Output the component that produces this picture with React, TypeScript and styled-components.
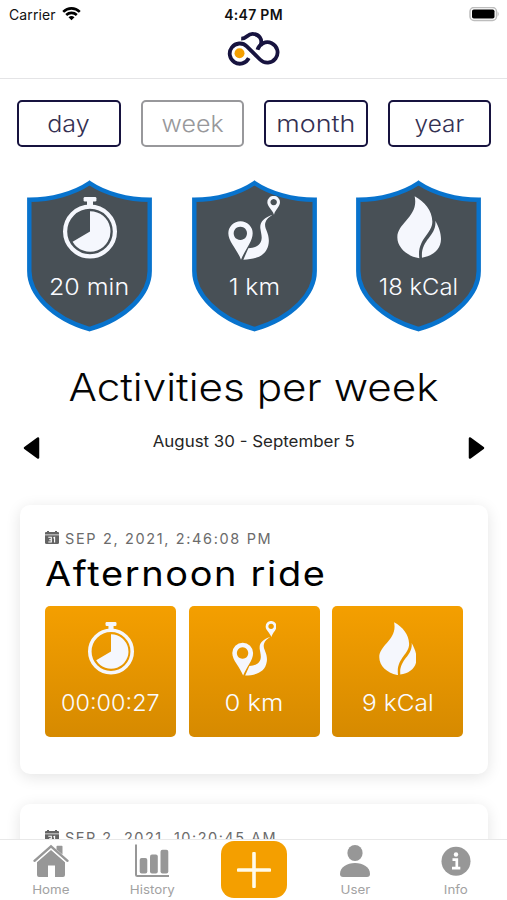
import React from "react";
import styled, { createGlobalStyle } from "styled-components";

const GlobalStyle = createGlobalStyle`
  * { box-sizing: border-box; }
  body { margin: 0; background: #fff; font-family: Inter, "Liberation Sans", sans-serif; }
  svg { display: block; flex: none; }
`;

const navy = "#17133f";
const orange = "#f49f00";

const Screen = styled.div`
  width: 507px;
  height: 900px;
  display: flex;
  flex-direction: column;
  overflow: hidden;
  background: #fff;
`;

const Header = styled.header`
  height: 79px;
  flex: none;
  border-bottom: 1px solid #e4e4e6;
`;

const StatusBar = styled.div`
  height: 28px;
  padding: 0 7px 0 9px;
  display: grid;
  grid-template-columns: 1fr auto 1fr;
  align-items: center;
  font-size: 14px;
  color: #111;
`;

const Carrier = styled.div`
  display: flex;
  align-items: center;
  gap: 6px;
  letter-spacing: 0.12px;
`;

const Clock = styled.div`
  font-weight: 600;
  letter-spacing: 0.3px;
  margin-right: 2px;
`;

const BatterySlot = styled.div`
  display: flex;
  justify-content: flex-end;
`;

const LogoRow = styled.div`
  display: flex;
  justify-content: center;
  padding: 3px 1px 0 0;
`;

const Content = styled.main`
  flex: 1;
  min-height: 0;
  overflow: hidden;
`;

const Periods = styled.div`
  display: grid;
  grid-template-columns: repeat(4, 1fr);
  gap: 20px;
  padding: 21px 16px 0 17px;
`;

const Period = styled.button<{ $muted?: boolean }>`
  height: 47px;
  padding: 1px 0 0;
  background: #fff;
  border: 2px solid ${(p) => (p.$muted ? "#98989b" : navy)};
  border-radius: 5px;
  color: ${(p) => (p.$muted ? "#98989b" : "#343052")};
  font-family: inherit;
  font-size: 23px;
  font-weight: 300;
  line-height: 28px;
`;

const WideText = styled.span<{ $stretch: number }>`
  display: inline-block;
  transform: scaleX(${(p) => p.$stretch});
`;

const Shields = styled.div`
  display: flex;
  justify-content: space-between;
  padding: 33px 25px 0 26px;
`;

const Shield = styled.div`
  width: 127px;
  height: 152px;
  display: grid;
  & > * { grid-area: 1 / 1; }
`;

const ShieldBody = styled.div`
  display: flex;
  flex-direction: column;
  align-items: center;
  padding-top: 16px;
`;

const IconBox = styled.div<{ $height: number }>`
  height: ${(p) => p.$height}px;
  display: flex;
  align-items: center;
  justify-content: center;
`;

const Value = styled.div<{ $stretch: number; $top: number }>`
  margin-top: ${(p) => p.$top}px;
  font-size: 22.5px;
  line-height: 28px;
  font-weight: 300;
  transform: scaleX(${(p) => p.$stretch});
  white-space: nowrap;
  color: #fafbff;
`;

const Heading = styled.h1`
  margin: 30px 0 0;
  text-align: center;
  font-size: 38.5px;
  line-height: 50px;
  font-weight: 300;
  transform: scaleX(1.097);
  white-space: nowrap;
  color: #050505;
`;

const RangeRow = styled.div`
  height: 54px;
  display: flex;
  align-items: center;
  justify-content: space-between;
  padding: 0 22px 0 23px;
  margin-top: 9px;
`;

const Range = styled.div`
  font-size: 15.5px;
  line-height: 20px;
  transform: scaleX(1.09);
  margin-top: -12px;
  color: #252525;
`;

const Card = styled.section`
  width: 468px;
  height: 269px;
  margin: 30px 0 0 20px;
  padding: 23px 25px 0;
  border-radius: 10px;
  background: #fff;
  box-shadow: 0 3px 15px rgba(0, 0, 0, 0.11);
`;

const DateLine = styled.div<{ $track: number }>`
  height: 20px;
  display: flex;
  align-items: center;
  gap: 6px;
  font-size: 14.5px;
  letter-spacing: ${(p) => p.$track}px;
  white-space: nowrap;
  color: #6b6b6b;
`;

const RideTitle = styled.h2`
  margin: 4px 0 0;
  height: 44px;
  font-size: 34.5px;
  line-height: 44px;
  font-weight: 400;
  letter-spacing: 1.5px;
  transform: scaleX(1.1);
  transform-origin: left;
  white-space: nowrap;
  color: #000;
`;

const Tiles = styled.div`
  display: grid;
  grid-template-columns: repeat(3, 131px);
  justify-content: space-between;
  margin-top: 10px;
`;

const Tile = styled.div`
  height: 131px;
  border-radius: 5px;
  background: linear-gradient(#f49f00, #d68a00);
  display: flex;
  flex-direction: column;
  align-items: center;
  padding-top: 15px;
`;

const TabBar = styled.nav`
  height: 61px;
  flex: none;
  display: grid;
  grid-template-columns: repeat(5, 1fr);
  background: #fff;
  border-top: 1px solid #e8e8e8;
`;

const Tab = styled.div`
  display: flex;
  flex-direction: column;
  align-items: center;
  padding-top: 4px;
  color: #979797;
`;

const TabLabel = styled.span`
  margin-top: 4px;
  font-size: 12px;
  line-height: 16px;
  transform: scaleX(1.11);
  color: #a2a2a2;
`;

const AddButton = styled.div`
  width: 66px;
  height: 57px;
  margin: 1px 0 0 18px;
  border-radius: 13px;
  background: ${orange};
  display: flex;
  align-items: center;
  justify-content: center;
`;

const Wifi = () => (
  <svg width="19" height="14" viewBox="0 0 19 14" fill="none" stroke="#000" strokeWidth="2.6">
    <path d="M1.2 4.900C6 .2 13 .2 17.8 4.900" />
    <path d="M4.200 8C7.200 5.200 11.800 5.200 14.800 8" />
    <path d="M9.5 13.2 6.500 10.2Q9.5 8 12.500 10.2Z" fill="#000" stroke="none" />
  </svg>
);

const Battery = () => (
  <svg width="31" height="15" viewBox="0 0 31 15">
    <rect x="1" y="0.5" width="26.5" height="13" rx="4" fill="#fff" stroke="#bdbdbd" strokeWidth="1.5" />
    <rect x="3" y="2.500" width="22.5" height="9" rx="1.8" />
    <path d="M28.7 4.500q2 2.5 0 5z" fill="#b5b5b5" />
  </svg>
);

const Logo = () => (
  <svg width="54" height="36" viewBox="0 0 54 36" fill="none" stroke={navy} strokeWidth="3.8">
    <path d="M22.800 27.2A10.1 10.1 0 1 1 20.800 15.3L34 28.5A10.2 10.2 0 1 0 31.500 18.8" />
    <path d="M15.200 7.600C21 7.800 21 2.900 26.500 2.900C33 2.900 37 8.500 34.500 14.500" />
    <circle cx="13.5" cy="22.3" r="5" fill={orange} stroke="none" />
  </svg>
);

const Stopwatch = ({ width, height }: { width: number; height: number }) => (
  <svg width={width} height={height} viewBox="0 0 54 62" fill="#f5f7fd">
    <rect x="20.6" y="0" width="12.8" height="4.6" rx="1.3" />
    <path d="M24 3h6v6h-6z" />
    <circle cx="27" cy="34.5" r="24.9" fill="none" stroke="#f5f7fd" strokeWidth="4.2" />
    <path d="M27 34.5V14.2A20.3 20.3 0 1 1 9.6 44.7Z" />
  </svg>
);

const Route = ({ width, height }: { width: number; height: number }) => (
  <svg width={width} height={height} viewBox="144 76 156 192" fill="#f5f7fd" fillRule="evenodd">
    <path d="M183 267C172 237 145 214 145 188A36.500 36.500 0 0 1 218 188C218 214 195 237 183 267ZM181 168a20 20 0 1 0 .01 0Z" />
    <path d="M282 132C277 116 262 108 262 94.500A19 19 0 0 1 300 94.500C300 108 286 116 282 132ZM281 85a9.500 9.500 0 1 0 .01 0Z" />
    <path d="M278 132C253 140 239 153 241 173C243 189 250 205 239 219C231 229 219 232 205 233L190 267C231 266 261 254 266 218C270 187 251 175 256 156C259 145 267 139 278 132Z" />
  </svg>
);

const Flame = ({ width, height }: { width: number; height: number }) => (
  <svg width={width} height={height} viewBox="153 77 132 188" fill="#f5f7fd">
    <path d="M206 78C236 94 258 121 259 153C260 191 212 205 220 264C181 257 154 231 154 201C154 157 219 139 206 78Z" />
    <path d="M268 151C278 170 285 185 285 206C285 238 260 257 228 262C223 208 273 197 268 151Z" />
  </svg>
);

const ShieldShape = () => (
  <svg width="127" height="152" viewBox="0 0 127 152">
    <path
      d="M63.500 3C48 13.500 25 19.800 3.300 19.800V91C3.300 113 25 138 63.500 149.200C102 138 123.700 113 123.700 91V19.800C102 19.800 79 13.500 63.500 3Z"
      fill="#485056"
      stroke="#0873cd"
      strokeWidth="4.4"
    />
  </svg>
);

const Arrow = ({ flip }: { flip?: boolean }) => (
  <svg width="17" height="24" viewBox="0 0 17 24">
    <path
      d={flip ? "M2 2.500 15 12 2 21.500Z" : "M15 2.500 2 12 15 21.500Z"}
      stroke="#000"
      strokeWidth="2.500"
      strokeLinejoin="round"
    />
  </svg>
);

const Calendar = () => (
  <svg width="14" height="15" viewBox="0 0 14 15" fill="#646464">
    <path d="M2 0h2v1h6V0h2v1h1q1 0 1 1v1.500H0V2q0-1 1-1h1z" />
    <path d="M0 4.300h14V11.500q0 1.500-1.500 1.500h-11Q0 13 0 11.500z" />
    <path d="M3.300 6.300h3v4.700h-3M4.100 8.700h2M8.300 7 9.600 6.400v5" fill="none" stroke="#fff" strokeWidth="1.100" />
  </svg>
);

const HomeIcon = () => (
  <svg width="36" height="34" viewBox="0 0 36 34" fill="currentColor">
    <path d="M4 18.200 18 6l14 12.200V31q0 2-2 2h-8V21.500h-7V33H6q-2 0-2-2z" />
    <path d="M1.500 16.800 18 2.300 34.500 16.800" fill="none" stroke="#fff" strokeWidth="4.600" />
    <path d="M1.500 16.800 18 2.300 34.500 16.800" fill="none" stroke="currentColor" strokeWidth="2.400" strokeLinecap="round" />
    <path d="M23.500 2.600q0-.8.8-.8h4.400q.8 0 .8.8v8l-6-5.200z" />
  </svg>
);

const HistoryIcon = () => (
  <svg width="36" height="34" viewBox="0 0 36 34" fill="currentColor">
    <path d="M2 .5V30.500q0 1.500 1.500 1.500H35" fill="none" stroke="currentColor" strokeWidth="2" />
    <rect x="5.700" y="14" width="7.600" height="15.500" rx="2" />
    <rect x="16" y="10.500" width="7.800" height="19" rx="2" />
    <rect x="26.500" y="5.800" width="7.800" height="23.700" rx="2" />
  </svg>
);

const UserIcon = () => (
  <svg width="36" height="34" viewBox="0 0 36 34" fill="currentColor">
    <ellipse cx="18" cy="9" rx="7.600" ry="8" />
    <path d="M3 30C3 23 10 19 18 19s15 4 15 11q0 3-3 3H6q-3 0-3-3z" />
  </svg>
);

const InfoIcon = () => (
  <svg width="36" height="34" viewBox="0 0 36 34">
    <circle cx="18" cy="17.200" r="14.500" fill="currentColor" />
    <circle cx="18" cy="10.500" r="2.200" fill="#fff" />
    <path d="M14.500 15.700h4.300v7.800M14 24.200h8.300" fill="none" stroke="#fff" strokeWidth="2.700" />
  </svg>
);

const Plus = () => (
  <svg width="34" height="36" viewBox="0 0 34 36">
    <path d="M17 1.500v33M1.500 18h31" stroke="#fffbe9" strokeWidth="3.600" strokeLinecap="round" />
  </svg>
);

const periods = [
  { label: "day", stretch: 1.09 },
  { label: "week", stretch: 1.085, muted: true },
  { label: "month", stretch: 1.17 },
  { label: "year", stretch: 1.06 },
];

export default function App() {
  return (
    <>
      <GlobalStyle />
      <Screen>
        <Header>
          <StatusBar>
            <Carrier>Carrier <Wifi /></Carrier>
            <Clock>4:47 PM</Clock>
            <BatterySlot><Battery /></BatterySlot>
          </StatusBar>
          <LogoRow><Logo /></LogoRow>
        </Header>
        <Content>
          <Periods>
            {periods.map((p) => (
              <Period key={p.label} $muted={p.muted}>
                <WideText $stretch={p.stretch}>{p.label}</WideText>
              </Period>
            ))}
          </Periods>
          <Shields>
            <Shield>
              <ShieldShape />
              <ShieldBody>
                <IconBox $height={63}><Stopwatch width={54} height={62} /></IconBox>
                <Value $top={14} $stretch={1.11}>20 min</Value>
              </ShieldBody>
            </Shield>
            <Shield>
              <ShieldShape />
              <ShieldBody>
                <IconBox $height={63}><Route width={52} height={64} /></IconBox>
                <Value $top={14} $stretch={1.1}>1 km</Value>
              </ShieldBody>
            </Shield>
            <Shield>
              <ShieldShape />
              <ShieldBody>
                <IconBox $height={63}><Flame width={44} height={62.7} /></IconBox>
                <Value $top={14} $stretch={1.06}>18 kCal</Value>
              </ShieldBody>
            </Shield>
          </Shields>
          <Heading>Activities per week</Heading>
          <RangeRow>
            <Arrow />
            <Range>August 30 - September 5</Range>
            <Arrow flip />
          </RangeRow>
          <Card>
            <DateLine $track={1.64}><Calendar />SEP 2, 2021, 2:46:08 PM</DateLine>
            <RideTitle>Afternoon ride</RideTitle>
            <Tiles>
              <Tile>
                <IconBox $height={55}><Stopwatch width={46} height={53} /></IconBox>
                <Value $top={13} $stretch={1.04}>00:00:27</Value>
              </Tile>
              <Tile>
                <IconBox $height={55}><Route width={44.500} height={55} /></IconBox>
                <Value $top={13} $stretch={1.14}>0 km</Value>
              </Tile>
              <Tile>
                <IconBox $height={55}><Flame width={37.500} height={53.500} /></IconBox>
                <Value $top={13} $stretch={1.09}>9 kCal</Value>
              </Tile>
            </Tiles>
          </Card>
          <Card>
            <DateLine $track={1.5}><Calendar />SEP 2, 2021, 10:20:45 AM</DateLine>
          </Card>
        </Content>
        <TabBar>
          <Tab><HomeIcon /><TabLabel>Home</TabLabel></Tab>
          <Tab><HistoryIcon /><TabLabel>History</TabLabel></Tab>
          <AddButton><Plus /></AddButton>
          <Tab><UserIcon /><TabLabel>User</TabLabel></Tab>
          <Tab><InfoIcon /><TabLabel>Info</TabLabel></Tab>
        </TabBar>
      </Screen>
    </>
  );
}
